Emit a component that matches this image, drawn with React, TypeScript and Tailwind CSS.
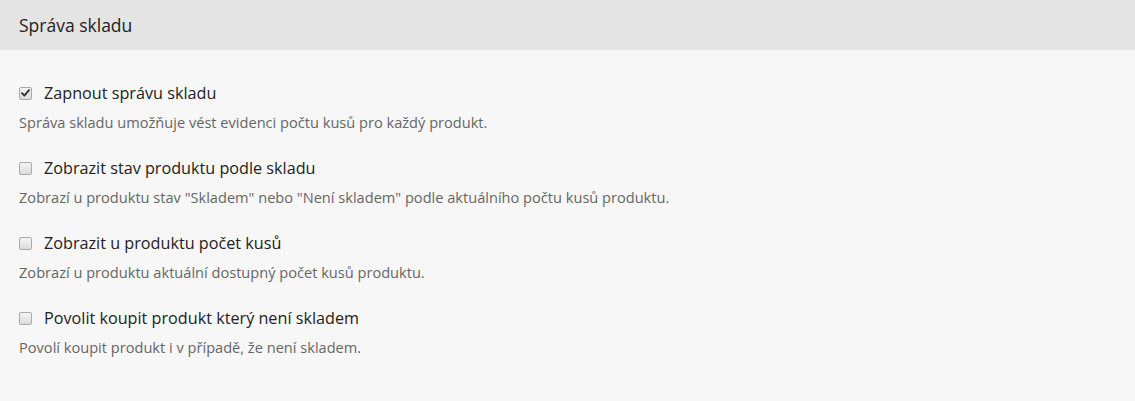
import React from "react";

const items = [
  { label: "Zapnout správu skladu", desc: "Správa skladu umožňuje vést evidenci počtu kusů pro každý produkt.", checked: true },
  { label: "Zobrazit stav produktu podle skladu", desc: 'Zobrazí u produktu stav "Skladem" nebo "Není skladem" podle aktuálního počtu kusů produktu.', checked: false },
  { label: "Zobrazit u produktu počet kusů", desc: "Zobrazí u produktu aktuální dostupný počet kusů produktu.", checked: false },
  { label: "Povolit koupit produkt který není skladem", desc: "Povolí koupit produkt i v případě, že není skladem.", checked: false },
];

function Box({ checked }: { checked: boolean }) {
  return (
    <span className="w-[13px] h-[13px] rounded-[2px] border border-[#a9a9a9] bg-gradient-to-b from-[#f4f4f4] to-[#dcdcdc] flex items-center justify-center shrink-0">
      {checked && (
        <svg width="9" height="8" viewBox="0 0 9 8">
          <path d="M1 4.2 L3.4 6.6 L8 1.2" fill="none" stroke="#333" strokeWidth="1.9" strokeLinecap="round" strokeLinejoin="round" />
        </svg>
      )}
    </span>
  );
}

export default function App() {
  return (
    <div className="w-[1135px] h-[401px] bg-[#f7f7f7] font-['Open_Sans',sans-serif]">
      <div className="h-[50px] bg-[#e4e4e4] px-[19px] flex items-center text-[17.5px] text-[#222]">
        Správa skladu
      </div>
      <div className="px-[19px] pt-[31px] flex flex-col gap-[24px]">
        {items.map((it) => (
          <div key={it.label} className="flex flex-col gap-[7px]">
            <div className="flex items-center gap-[12px] h-[24px]">
              <Box checked={it.checked} />
              <span className="text-[16.2px] leading-[24px] text-[#222]">{it.label}</span>
            </div>
            <div className="text-[14.6px] leading-[20px] text-[#666]">{it.desc}</div>
          </div>
        ))}
      </div>
    </div>
  );
}
